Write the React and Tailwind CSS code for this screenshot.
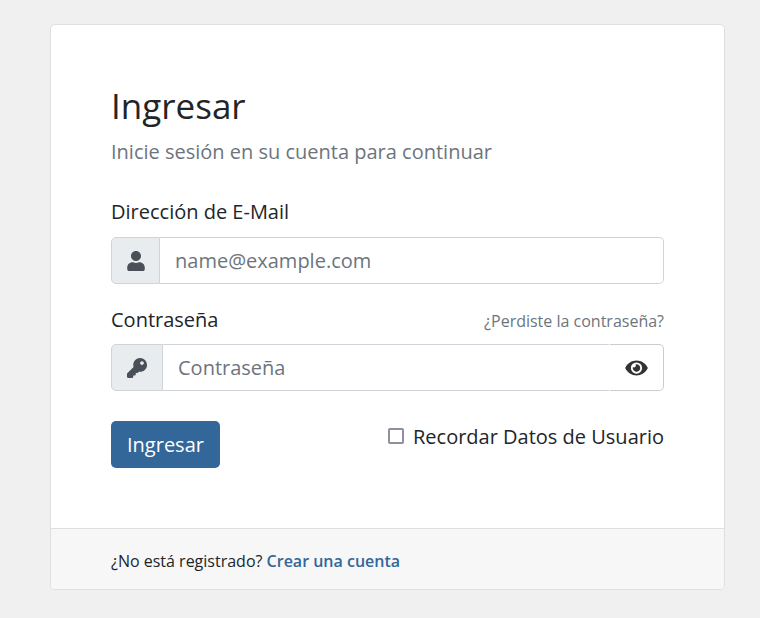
import { useState } from "react";
import { FaEye, FaEyeSlash, FaKey, FaUser } from "react-icons/fa";

export default function Login() {
  const [showPassword, setShowPassword] = useState(false);

  return (
    <main className="min-h-screen bg-[#f0f0f0] py-6 pr-[35px] pl-[50px] font-['Open_Sans',sans-serif] text-[20px] leading-[30px] text-[#212529]">
      <div className="overflow-hidden rounded-[5px] border border-[#dfdfdf] bg-white">
        <form className="p-[60px]" onSubmit={(e) => e.preventDefault()}>
          <h1 className="mb-[10px] text-[35px] leading-[42px]">Ingresar</h1>
          <p className="mb-[30px] text-[#6c757d]">Inicie sesión en su cuenta para continuar</p>

          <label htmlFor="email" className="mb-[10px] block">Dirección de E-Mail</label>
          <div className="mb-[21px] flex h-[47px]">
            <span className="flex w-[49px] items-center justify-center rounded-l-[5px] border border-[#ced4da] bg-[#e9ecef] text-[#495057]">
              <FaUser className="h-5 w-[18px]" />
            </span>
            <input id="email" type="email" placeholder="name@example.com" className="min-w-0 flex-1 rounded-r-[5px] border border-l-0 border-[#ced4da] px-[15px] outline-none placeholder:text-[#6c757d]" />
          </div>

          <div className="mb-[9px] flex items-baseline justify-between">
            <label htmlFor="password">Contraseña</label>
            <a href="#recuperar" className="text-[16px] leading-6 text-[#6c757d]">¿Perdiste la contraseña?</a>
          </div>
          <div className="mb-[30px] flex h-[47px]">
            <span className="flex w-[52px] items-center justify-center rounded-l-[5px] border border-[#ced4da] bg-[#e9ecef] text-[#495057]">
              <FaKey className="size-5" />
            </span>
            <input id="password" type={showPassword ? "text" : "password"} placeholder="Contraseña" className="min-w-0 flex-1 border-y border-[#ced4da] px-[15px] outline-none placeholder:text-[#6c757d]" />
            <button type="button" aria-label="Mostrar contraseña" onClick={() => setShowPassword((s) => !s)} className="ml-px rounded-r-[5px] border border-l-0 border-[#cccccc] px-[15px] text-[#333333]">
              {showPassword ? <FaEyeSlash className="h-5 w-[23px]" /> : <FaEye className="h-5 w-[23px]" />}
            </button>
          </div>

          <div className="flex items-start justify-between">
            <button type="submit" className="h-[47px] rounded-[5px] bg-[#336699] px-4 text-white">Ingresar</button>
            <label className="flex items-baseline gap-[9px] pt-px">
              <input type="checkbox" className="size-4 appearance-none rounded-[2px] border-2 border-[#8f8f9d] bg-white checked:bg-[#336699]" />
              Recordar Datos de Usuario
            </label>
          </div>
        </form>

        <div className="border-t border-[#dfdfdf] bg-[#f7f7f7] px-[60px] pt-[17px] pb-[13px] text-[16px]">
          ¿No está registrado? <a href="#registro" className="font-semibold text-[#336699]">Crear una cuenta</a>
        </div>
      </div>
    </main>
  );
}
